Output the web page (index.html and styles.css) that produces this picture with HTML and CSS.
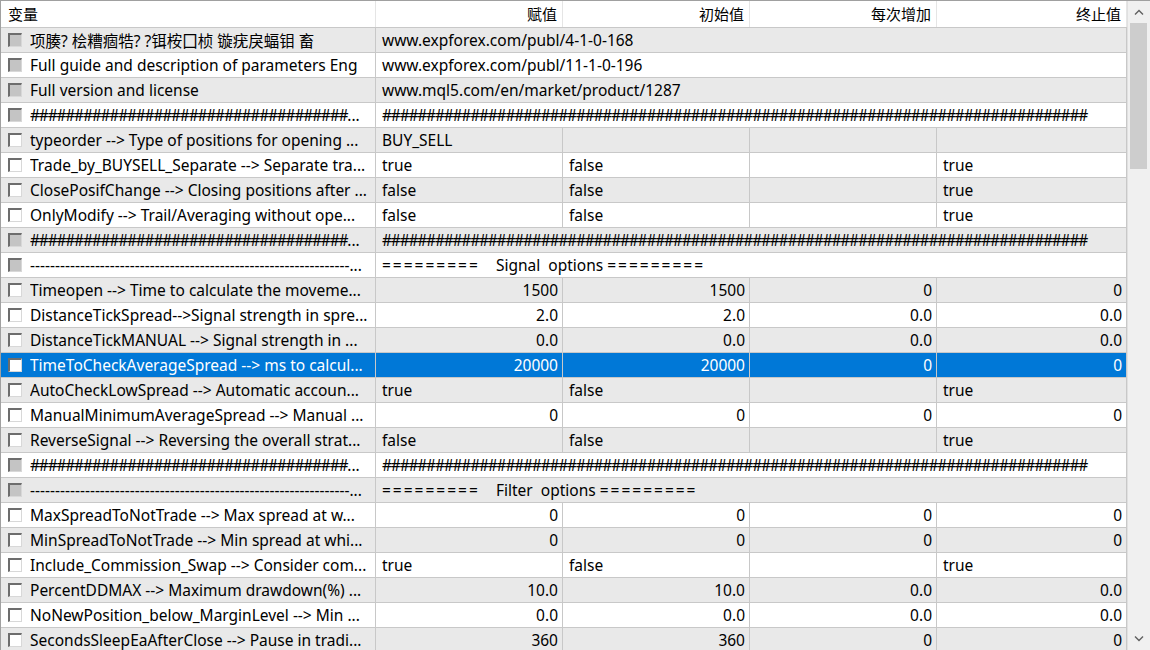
FILE: index.html
```html
<!DOCTYPE html>
<html lang="zh">
<head>
    <meta charset="UTF-8">
    <title>输入参数</title>
    <link rel="stylesheet" href="styles.css">
</head>
<body>
    <div class="window">
        <div class="grid">
            <div class="row head">
                <div class="cell first">变量</div>
                <div class="cell num">赋值</div>
                <div class="cell num">初始值</div>
                <div class="cell num">每次增加</div>
                <div class="cell num">终止值</div>
            </div>

            <div class="row odd">
                <div class="cell first"><span class="cb off"></span><span class="txt">项腠? 桧糟痼牿? ?铒桉囗桢 镟疣戾蝠钼 畜</span></div>
                <div class="cell span">www.expforex.com/publ/4-1-0-168</div>
            </div>
            <div class="row">
                <div class="cell first"><span class="cb off"></span><span class="txt">Full guide and description of parameters Eng</span></div>
                <div class="cell span">www.expforex.com/publ/11-1-0-196</div>
            </div>
            <div class="row odd">
                <div class="cell first"><span class="cb off"></span><span class="txt">Full version and license</span></div>
                <div class="cell span">www.mql5.com/en/market/product/1287</div>
            </div>
            <div class="row">
                <div class="cell first"><span class="cb off"></span><span class="txt"><span class="hash">####################################</span>...</span></div>
                <div class="cell span hash">################################################################################</div>
            </div>
            <div class="row odd">
                <div class="cell first"><span class="cb"></span><span class="txt">typeorder --> Type of positions for opening ...</span></div>
                <div class="cell">BUY_SELL</div>
                <div class="cell"></div>
                <div class="cell"></div>
                <div class="cell"></div>
            </div>
            <div class="row">
                <div class="cell first"><span class="cb"></span><span class="txt">Trade_by_BUYSELL_Separate --> Separate tra...</span></div>
                <div class="cell">true</div>
                <div class="cell">false</div>
                <div class="cell"></div>
                <div class="cell">true</div>
            </div>
            <div class="row odd">
                <div class="cell first"><span class="cb"></span><span class="txt">ClosePosifChange --> Closing positions after ...</span></div>
                <div class="cell">false</div>
                <div class="cell">false</div>
                <div class="cell"></div>
                <div class="cell">true</div>
            </div>
            <div class="row">
                <div class="cell first"><span class="cb"></span><span class="txt">OnlyModify --> Trail/Averaging without ope...</span></div>
                <div class="cell">false</div>
                <div class="cell">false</div>
                <div class="cell"></div>
                <div class="cell">true</div>
            </div>
            <div class="row odd">
                <div class="cell first"><span class="cb off"></span><span class="txt"><span class="hash">####################################</span>...</span></div>
                <div class="cell span hash">################################################################################</div>
            </div>
            <div class="row">
                <div class="cell first"><span class="cb off"></span><span class="txt">----------------------------------------------------------------...</span></div>
                <div class="cell span pre"><span class="eq">=========</span>    Signal  options <span class="eq">=========</span></div>
            </div>
            <div class="row odd">
                <div class="cell first"><span class="cb"></span><span class="txt">Timeopen --> Time to calculate the moveme...</span></div>
                <div class="cell num">1500</div>
                <div class="cell num">1500</div>
                <div class="cell num">0</div>
                <div class="cell num">0</div>
            </div>
            <div class="row">
                <div class="cell first"><span class="cb"></span><span class="txt">DistanceTickSpread-->Signal strength in spre...</span></div>
                <div class="cell num">2.0</div>
                <div class="cell num">2.0</div>
                <div class="cell num">0.0</div>
                <div class="cell num">0.0</div>
            </div>
            <div class="row odd">
                <div class="cell first"><span class="cb"></span><span class="txt">DistanceTickMANUAL --> Signal strength in ...</span></div>
                <div class="cell num">0.0</div>
                <div class="cell num">0.0</div>
                <div class="cell num">0.0</div>
                <div class="cell num">0.0</div>
            </div>
            <div class="row selected">
                <div class="cell first"><span class="cb"></span><span class="txt">TimeToCheckAverageSpread --> ms to calcul...</span></div>
                <div class="cell num">20000</div>
                <div class="cell num">20000</div>
                <div class="cell num">0</div>
                <div class="cell num">0</div>
            </div>
            <div class="row odd">
                <div class="cell first"><span class="cb"></span><span class="txt">AutoCheckLowSpread --> Automatic accoun...</span></div>
                <div class="cell">true</div>
                <div class="cell">false</div>
                <div class="cell"></div>
                <div class="cell">true</div>
            </div>
            <div class="row">
                <div class="cell first"><span class="cb"></span><span class="txt">ManualMinimumAverageSpread --> Manual ...</span></div>
                <div class="cell num">0</div>
                <div class="cell num">0</div>
                <div class="cell num">0</div>
                <div class="cell num">0</div>
            </div>
            <div class="row odd">
                <div class="cell first"><span class="cb"></span><span class="txt">ReverseSignal --> Reversing the overall strat...</span></div>
                <div class="cell">false</div>
                <div class="cell">false</div>
                <div class="cell"></div>
                <div class="cell">true</div>
            </div>
            <div class="row">
                <div class="cell first"><span class="cb off"></span><span class="txt"><span class="hash">####################################</span>...</span></div>
                <div class="cell span hash">################################################################################</div>
            </div>
            <div class="row odd">
                <div class="cell first"><span class="cb off"></span><span class="txt">----------------------------------------------------------------...</span></div>
                <div class="cell span pre"><span class="eq">=========</span>    Filter  options <span class="eq">=========</span></div>
            </div>
            <div class="row">
                <div class="cell first"><span class="cb"></span><span class="txt">MaxSpreadToNotTrade --> Max spread at w...</span></div>
                <div class="cell num">0</div>
                <div class="cell num">0</div>
                <div class="cell num">0</div>
                <div class="cell num">0</div>
            </div>
            <div class="row odd">
                <div class="cell first"><span class="cb"></span><span class="txt">MinSpreadToNotTrade --> Min spread at whi...</span></div>
                <div class="cell num">0</div>
                <div class="cell num">0</div>
                <div class="cell num">0</div>
                <div class="cell num">0</div>
            </div>
            <div class="row">
                <div class="cell first"><span class="cb"></span><span class="txt">Include_Commission_Swap --> Consider com...</span></div>
                <div class="cell">true</div>
                <div class="cell">false</div>
                <div class="cell"></div>
                <div class="cell">true</div>
            </div>
            <div class="row odd">
                <div class="cell first"><span class="cb"></span><span class="txt">PercentDDMAX --> Maximum drawdown(%) ...</span></div>
                <div class="cell num">10.0</div>
                <div class="cell num">10.0</div>
                <div class="cell num">0.0</div>
                <div class="cell num">0.0</div>
            </div>
            <div class="row">
                <div class="cell first"><span class="cb"></span><span class="txt">NoNewPosition_below_MarginLevel --> Min ...</span></div>
                <div class="cell num">0.0</div>
                <div class="cell num">0.0</div>
                <div class="cell num">0.0</div>
                <div class="cell num">0.0</div>
            </div>
            <div class="row odd">
                <div class="cell first"><span class="cb"></span><span class="txt">SecondsSleepEaAfterClose --> Pause in tradi...</span></div>
                <div class="cell num">360</div>
                <div class="cell num">360</div>
                <div class="cell num">0</div>
                <div class="cell num">0</div>
            </div>
        </div>

        <div class="scrollbar">
            <div class="arrow">
                <svg width="10" height="6" viewBox="0 0 10 6"><path d="M1 5.5 L5 1.5 L9 5.5" fill="none" stroke="#606060" stroke-width="1.4"/></svg>
            </div>
            <div class="track">
                <div class="thumb"></div>
            </div>
            <div class="arrow">
                <svg width="10" height="6" viewBox="0 0 10 6"><path d="M1 0.5 L5 4.5 L9 0.5" fill="none" stroke="#606060" stroke-width="1.4"/></svg>
            </div>
        </div>
    </div>
</body>
</html>
```

FILE: styles.css
```css
body {
    margin: 0;
    background-color: #fff;
    font-family: "Noto Sans", "Noto Sans CJK SC", sans-serif;
    font-size: 15.5px;
    color: #000;
}

.window {
    display: flex;
    width: 1150px;
    height: 650px;
    overflow: hidden;
    border-top: 1px solid #a0a0a0;
    box-sizing: border-box;
}

.grid {
    width: 1127px;
    border-left: 1px solid #a0a0a0;
    box-sizing: border-box;
}

.row {
    display: grid;
    grid-template-columns: 375px 187px 187px 187px 190px;
    height: 25px;
    border-bottom: 1px solid #c8c8c8;
    box-sizing: border-box;
    background-color: #fff;
}

.row.odd {
    background-color: #e9e9e9;
}

.row.selected {
    background-color: #0078d7;
    color: #fff;
}

.row.head {
    height: 27px;
    border-bottom: 1px solid #c8c8c8;
}

.head .cell {
    border-right: 1px solid #e5e5e5;
    line-height: 26px;
    padding: 0 5px 0 7px;
    font-family: "Noto Sans CJK SC", sans-serif;
    font-size: 15px;
}

.cell {
    display: flex;
    align-items: center;
    border-right: 1px solid #c8c8c8;
    padding: 0 4px 0 6px;
    white-space: nowrap;
    overflow: hidden;
    min-width: 0;
}

.cell.first {
    padding-left: 7px;
}

.cell.num {
    justify-content: flex-end;
}

.cell.span {
    grid-column: 2 / 6;
}

.cell.pre {
    white-space: pre;
}

.eq {
    letter-spacing: 2px;
}

.hash {
    letter-spacing: -1.2px;
}

.txt {
    overflow: hidden;
    text-overflow: ellipsis;
    min-width: 0;
}

.cb {
    flex: none;
    width: 11px;
    height: 11px;
    margin-right: 8px;
    background-color: #fff;
    border-top: 2px solid #6d6d6d;
    border-left: 2px solid #6d6d6d;
    border-right: 1px solid #d8d8d8;
    border-bottom: 1px solid #d8d8d8;
    box-sizing: content-box;
}

.cb.off {
    background-color: #c4c4c4;
}

.scrollbar {
    width: 23px;
    display: flex;
    flex-direction: column;
    background-color: #f0f0f0;
    border-left: 1px solid #e0e0e0;
    box-sizing: border-box;
}

.arrow {
    height: 22px;
    display: flex;
    align-items: center;
    justify-content: center;
}

.track {
    flex: 1;
}

.thumb {
    height: 146px;
    margin: 0 3px 0 2px;
    background-color: #cdcdcd;
}
```
